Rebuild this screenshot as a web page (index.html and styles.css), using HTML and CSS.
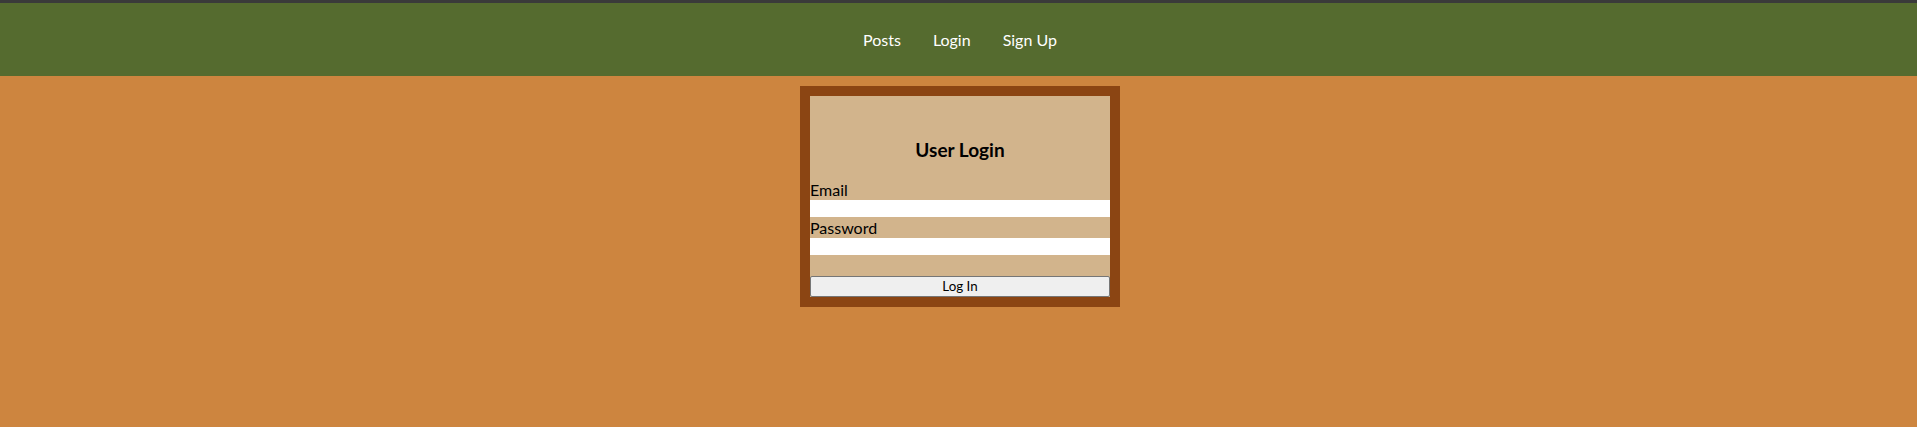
FILE: index.html
```html
<!DOCTYPE html>
<html lang="en">
<head>
<meta charset="utf-8">
<title>User Login</title>
<link rel="stylesheet" href="styles.css">
</head>
<body>
<header class="topbar">
  <nav class="nav">
    <a class="nav-link" href="#">Posts</a>
    <a class="nav-link" href="#">Login</a>
    <a class="nav-link" href="#">Sign Up</a>
  </nav>
</header>
<main class="page">
  <form class="login-card">
    <h3 class="login-title">User Login</h3>
    <label class="field-label" for="email">Email</label>
    <input class="field-input" id="email" type="email">
    <label class="field-label" for="password">Password</label>
    <input class="field-input" id="password" type="password">
    <button class="login-button" type="button">Log In</button>
  </form>
</main>
</body>
</html>
```
FILE: styles.css
```css
html, body {
  margin: 0;
  padding: 0;
}
body {
  background: #cd853f;
  font-family: Lato, "Open Sans", sans-serif;
  min-height: 427px;
}
.topbar {
  border-top: 3px solid #3a3a3a;
  background: #556b2f;
  height: 73px;
  display: flex;
  align-items: center;
  justify-content: center;
  padding-left: 3px;
}
.nav {
  display: flex;
  gap: 32px;
}
.nav-link {
  color: #ffffff;
  text-decoration: none;
  font-size: 16px;
}
.page {
  display: flex;
  justify-content: center;
  padding-top: 10px;
  padding-left: 3px;
}
.login-card {
  width: 300px;
  background: #d2b48c;
  border: 10px solid #8b4513;
  display: flex;
  flex-direction: column;
}
.login-title {
  margin: 0;
  padding: 41px 0 17px;
  line-height: 25px;
  font-size: 19px;
  font-weight: bold;
  text-align: center;
  color: #000;
}
.field-label {
  display: block;
  font-size: 16px;
  line-height: 21px;
  color: #000;
}
.field-input {
  display: block;
  width: 100%;
  height: 17px;
  box-sizing: border-box;
  border: none;
  padding: 1px 2px;
  margin: 0;
  background: #fff;
  font-size: 13.33px;
  outline: none;
}
.login-button {
  margin-top: 21px;
  width: 100%;
  height: 21px;
  box-sizing: border-box;
  border: 1px solid #767676;
  border-radius: 2px;
  background: #efefef;
  font-family: Lato, "Open Sans", sans-serif;
  font-size: 13.33px;
  color: #000;
  padding: 1px 6px;
  line-height: 17px;
}
```
